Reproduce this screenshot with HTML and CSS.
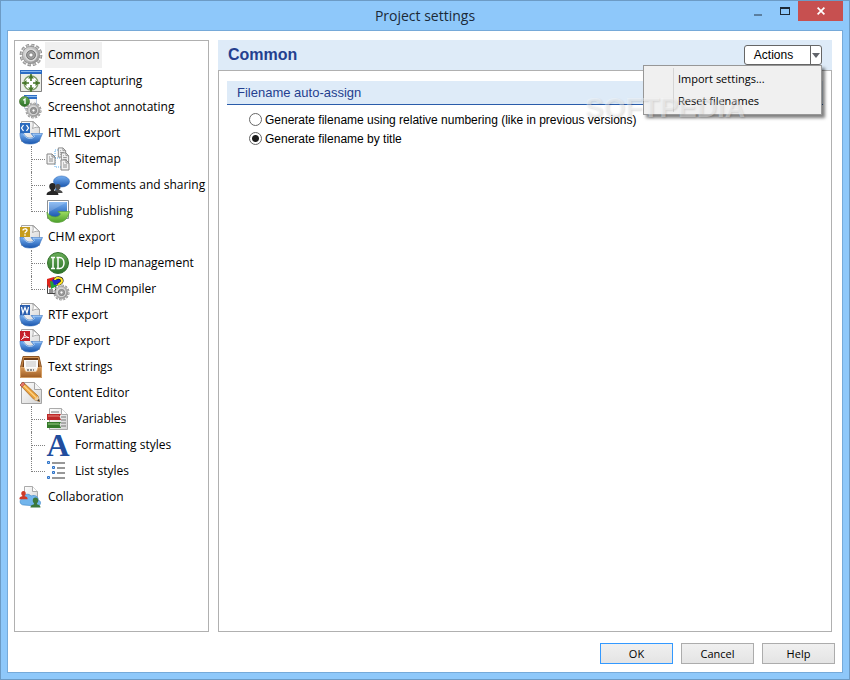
FILE: index.html
```html
<!DOCTYPE html>
<html lang="en">

<head>
    <meta charset="UTF-8">
    <meta name="viewport" content="width=device-width, initial-scale=1.0">
    <title>Project settings</title>
    <link rel="stylesheet" href="styles.css">
</head>

<body>
    <!-- Shared icon parts -->
    <svg class="defs" width="0" height="0" aria-hidden="true">
        <defs>
            <linearGradient id="metal" x1="0" y1="0" x2="1" y2="1">
                <stop offset="0" stop-color="#e2e2e2" />
                <stop offset="0.5" stop-color="#b8b8b8" />
                <stop offset="1" stop-color="#8b8b8b" />
            </linearGradient>
            <linearGradient id="blue" x1="0" y1="0" x2="0" y2="1">
                <stop offset="0" stop-color="#78b1f2" />
                <stop offset="1" stop-color="#1b57ae" />
            </linearGradient>
            <linearGradient id="green" x1="0" y1="0" x2="0" y2="1">
                <stop offset="0" stop-color="#69ad58" />
                <stop offset="1" stop-color="#2b7128" />
            </linearGradient>
            <linearGradient id="lime" x1="0" y1="0" x2="0" y2="1">
                <stop offset="0" stop-color="#9ddd61" />
                <stop offset="1" stop-color="#4da02c" />
            </linearGradient>
            <linearGradient id="paper" x1="0" y1="0" x2="1" y2="1">
                <stop offset="0" stop-color="#ffffff" />
                <stop offset="1" stop-color="#d4d4d4" />
            </linearGradient>
            <linearGradient id="wood" x1="0" y1="0" x2="0" y2="1">
                <stop offset="0" stop-color="#d79755" />
                <stop offset="1" stop-color="#9d5c24" />
            </linearGradient>
            <symbol id="gear" viewBox="0 0 24 24">
                <circle cx="12" cy="12" r="9.8" fill="none" stroke="#777" stroke-width="3" pathLength="72" stroke-dasharray="3.8 2.2" />
                <circle cx="12" cy="12" r="9.6" fill="none" stroke="#c4c4c4" stroke-width="2.2" pathLength="72" stroke-dasharray="3 3" stroke-dashoffset="-0.4" />
                <circle cx="12" cy="12" r="8.6" fill="url(#metal)" stroke="#8b8b8b" stroke-width="0.7" />
                <circle cx="12" cy="12" r="5.6" fill="none" stroke="#dcdcdc" stroke-width="1.6" />
                <circle cx="12" cy="12" r="4.4" fill="#a2a2a2" stroke="#707070" stroke-width="0.9" />
                <circle cx="12" cy="12" r="2.1" fill="#fff" stroke="#777" stroke-width="0.8" />
            </symbol>
            <symbol id="export" viewBox="0 0 24 24">
                <path d="M2.500.5h12l6 6v14h-18z" fill="url(#paper)" stroke="#a5a5a5" />
                <path d="M13.500.5c1 2 1 4 0 7 3-1.500 5-1.500 7-1z" fill="#fff" stroke="#999" stroke-width="0.8" />
                <path d="M1 12c0 8 3 11 9.500 11 6 0 10-1.500 11-6l2-4.500H12l2.500 3c-1.500 2.500-8 2.500-10-3.500z" fill="url(#blue)" stroke="#3570bd" stroke-width="0.6" />
                <path d="M4.500 13c2 5.500 9 5.500 11 2.500l-1.500-2.300h8.500" fill="none" stroke="#b4d4f8" stroke-width="0.8" />
            </symbol>
            <symbol id="sheet" viewBox="0 0 10 12">
                <path d="M1 1h5l3 3v7H1z" fill="#f2f2f2" stroke="#858585" />
                <path d="M6 1v3h3M3 4h1M3 6h4M3 8h4" fill="none" stroke="#858585" stroke-width="0.9" />
            </symbol>
            <symbol id="person" viewBox="0 0 12 12">
                <path d="M6 .5c2 0 3 1.400 3 3.200 0 1.500-.7 2.500-1.400 3.100v1c2.200.5 3.900 1.200 3.900 3.700H.5c0-2.500 1.700-3.200 3.900-3.700v-1C3.700 6.200 3 5.200 3 3.700 3 1.900 4 .5 6 .5z" />
            </symbol>
        </defs>
    </svg>

    <div class="window">
        <header class="titlebar">
            <h1 class="window-title">Project settings</h1>
            <div class="window-buttons">
                <button class="win-btn" aria-label="Minimize">
                    <svg width="10" height="12" viewBox="0 0 10 12"><path d="M1 9h8v2H1z" fill="#5b7f9f" /></svg>
                </button>
                <button class="win-btn" aria-label="Maximize">
                    <svg width="10" height="8" viewBox="0 0 10 8"><path d="M0 0h10v8H0zM1 2v5h8V2z" fill="#1d2a36" fill-rule="evenodd" /></svg>
                </button>
                <button class="win-btn close" aria-label="Close">
                    <svg width="8" height="8" viewBox="0 0 8 8"><path d="M.6.6l6.800 6.800M7.400.6L.6 7.400" stroke="#fff" stroke-width="1.700" /></svg>
                </button>
            </div>
        </header>

        <div class="client">
            <div class="content">
                <nav class="tree" aria-label="Settings sections">
                    <ul>
                        <li>
                            <a class="row selected" href="#common">
                                <svg class="icon" viewBox="0 0 24 24"><use href="#gear" width="24" height="24" /></svg>
                                <span>Common</span>
                            </a>
                        </li>
                        <li>
                            <a class="row" href="#capturing">
                                <svg class="icon" viewBox="0 0 24 24">
                                    <path d="M1.500 1.500h21v21h-21z" fill="#eceee8" stroke="#7f7f7f" />
                                    <path d="M1 1h22v4H1z" fill="#2c6cc4" />
                                    <path d="M2 2h20v1H2z" fill="#86b7ee" />
                                    <circle cx="12" cy="14" r="7" fill="#fff" stroke="#7d9c66" stroke-width="1.300" />
                                    <path d="M12 5v7M12 16v7M3 14h7M14 14h7" stroke="#47762a" stroke-width="1.600" />
                                    <path d="M12 6l-3 3.500h6zM12 22l-3-3.500h6zM4 14l3.500-3v6zM20 14l-3.500-3v6z" fill="#47762a" />
                                </svg>
                                <span>Screen capturing</span>
                            </a>
                        </li>
                        <li>
                            <a class="row" href="#annotating">
                                <svg class="icon" viewBox="0 0 24 24">
                                    <path d="M5.500.5h12v13h-12z" fill="#f7f7f7" stroke="#b9c6d8" />
                                    <path d="M5 0h13v4H5z" fill="#2f70c6" />
                                    <path d="M5 1h13v1H5z" fill="#8dbbed" />
                                    <circle cx="5.500" cy="6.500" r="5" fill="url(#green)" stroke="#38631e" stroke-width="0.6" />
                                    <path d="M4.200 5.200L6 4v5" fill="none" stroke="#fff" stroke-width="1.300" />
                                    <use href="#gear" x="6" y="7" width="17" height="17" />
                                </svg>
                                <span>Screenshot annotating</span>
                            </a>
                        </li>
                        <li>
                            <a class="row" href="#html">
                                <svg class="icon" viewBox="0 0 24 24">
                                    <use href="#export" width="24" height="24" />
                                    <path d="M1 2h10v10H1z" fill="#2b6bbe" />
                                    <path d="M4.500 4L2.500 7l2 3M7.500 4l2 3-2 3" fill="none" stroke="#fff" stroke-width="1.300" />
                                </svg>
                                <span>HTML export</span>
                            </a>
                            <ul class="branch">
                                <li>
                                    <a class="row" href="#sitemap">
                                        <svg class="icon" viewBox="0 0 24 24">
                                            <path d="M9 11V3h3M9 11v9h6M9 11h6" fill="none" stroke="#59a9e8" stroke-dasharray="1 1" />
                                            <use href="#sheet" x="0" y="6" width="10" height="12" />
                                            <use href="#sheet" x="11" y="0" width="10" height="11" />
                                            <use href="#sheet" x="14" y="5" width="10" height="11" />
                                            <use href="#sheet" x="14" y="12" width="10" height="12" />
                                        </svg>
                                        <span>Sitemap</span>
                                    </a>
                                </li>
                                <li>
                                    <a class="row" href="#comments">
                                        <svg class="icon" viewBox="0 0 24 24">
                                            <path d="M10 13l-1 5 6-3z" fill="#205eaa" />
                                            <ellipse cx="15.500" cy="8.500" rx="8" ry="5.500" fill="url(#blue)" stroke="#386fba" stroke-width="0.6" />
                                            <use href="#person" x="7" y="10" width="10" height="11" fill="#4a4a4a" />
                                            <use href="#person" x="0" y="9" width="13" height="14" fill="#272727" />
                                        </svg>
                                        <span>Comments and sharing</span>
                                    </a>
                                </li>
                                <li>
                                    <a class="row" href="#publishing">
                                        <svg class="icon" viewBox="0 0 24 24">
                                            <path d="M1.500 1.500h21v18h-21z" fill="#fff" stroke="#8d9195" />
                                            <path d="M3 3h18v15H3z" fill="url(#blue)" />
                                            <path d="M3 3h18L3 13z" fill="#fff" opacity="0.18" />
                                            <path d="M1 13c2 5 11 7 13.500 2L12 12.500h11.500L22 17c-2 4.500-6 6.500-11 6.500-7 0-10-4-10-10.500z" fill="url(#lime)" stroke="#579d3a" stroke-width="0.700" />
                                        </svg>
                                        <span>Publishing</span>
                                    </a>
                                </li>
                            </ul>
                        </li>
                        <li>
                            <a class="row" href="#chm">
                                <svg class="icon" viewBox="0 0 24 24">
                                    <use href="#export" width="24" height="24" />
                                    <path d="M1 2h10v10H1z" fill="#c69c1d" />
                                    <path d="M4 5.500C4 3.300 8 3.300 8 5.300 8 6.800 6 6.800 6 8.300M6 9.200v1.500" fill="none" stroke="#fff" stroke-width="1.400" />
                                </svg>
                                <span>CHM export</span>
                            </a>
                            <ul class="branch">
                                <li>
                                    <a class="row" href="#help-id">
                                        <svg class="icon" viewBox="0 0 24 24">
                                            <circle cx="12" cy="12" r="10.500" fill="url(#green)" stroke="#34722d" />
                                            <path d="M7 6v12M5 6.500h4M5 17.500h4M12 6.500v11M10.500 6.500h3c6 0 6 11 0 11h-3" fill="none" stroke="#fff" stroke-width="1.500" />
                                        </svg>
                                        <span>Help ID management</span>
                                    </a>
                                </li>
                                <li>
                                    <a class="row" href="#compiler">
                                        <svg class="icon" viewBox="0 0 24 24">
                                            <path d="M1.500 5.500h8v11h-8z" fill="#fff" stroke="#444" />
                                            <path d="M3 13h4M3 15h4" stroke="#222" />
                                            <path d="M1 2l7-2 3 3-2 6-6 2-2-4z" fill="#e0251b" />
                                            <path d="M4 4l5 1 2 4-6 3z" fill="#20a43a" />
                                            <path d="M6 3l6-3 4 3-3 4-5 1z" fill="#202ad0" />
                                            <path d="M9 3c0-3 7-3 7 1 0 3-4 2-4 5" fill="none" stroke="#222" stroke-width="3.200" />
                                            <path d="M9 3c0-3 7-3 7 1 0 3-4 2-4 5" fill="none" stroke="#ffe424" stroke-width="2" />
                                            <use href="#gear" x="7" y="7" width="17" height="17" />
                                        </svg>
                                        <span>CHM Compiler</span>
                                    </a>
                                </li>
                            </ul>
                        </li>
                        <li>
                            <a class="row" href="#rtf">
                                <svg class="icon" viewBox="0 0 24 24">
                                    <use href="#export" width="24" height="24" />
                                    <path d="M1 2h10v10H1z" fill="#2b5fae" />
                                    <path d="M2.500 4l1.400 6L6 4.500 8 10l1.500-6" fill="none" stroke="#fff" stroke-width="1.200" />
                                </svg>
                                <span>RTF export</span>
                            </a>
                        </li>
                        <li>
                            <a class="row" href="#pdf">
                                <svg class="icon" viewBox="0 0 24 24">
                                    <use href="#export" width="24" height="24" />
                                    <path d="M1 2h10v10H1z" fill="#c5202a" />
                                    <path d="M2.500 10.500C4.500 9 6.500 5 5.500 3.500 4.500 4 6 8 9.800 8.600 7 7.500 4 8.500 2.500 10.500z" fill="none" stroke="#fff" />
                                </svg>
                                <span>PDF export</span>
                            </a>
                        </li>
                        <li>
                            <a class="row" href="#strings">
                                <svg class="icon" viewBox="0 0 24 24">
                                    <path d="M4 1.500h16l2.500 11v10h-21v-10z" fill="url(#wood)" stroke="#8c5524" />
                                    <path d="M5 3h14l1.500 9h-17z" fill="#71401a" />
                                    <path d="M5 5h14v11H5z" fill="#fafafa" />
                                    <path d="M7 7h10M7 9h10M7 11h10" stroke="#c4c4c4" />
                                    <path d="M1.500 12.500H5l1.500 4h11l1.500-4h3.500v10h-21z" fill="url(#wood)" stroke="#e2ad72" stroke-width="0.800" />
                                    <path d="M7 13h10v3.500H7z" fill="#f4efe8" />
                                    <path d="M8 15h2M11 15h2M14 15h1" stroke="#8c8c8c" stroke-width="2" />
                                </svg>
                                <span>Text strings</span>
                            </a>
                        </li>
                        <li>
                            <a class="row" href="#editor">
                                <svg class="icon" viewBox="0 0 24 24">
                                    <path d="M2.500 1.500h13l7 7v14h-20z" fill="url(#paper)" stroke="#a4a4a4" />
                                    <path d="M15.500 1.500v7h7" fill="#f4f4f4" stroke="#a4a4a4" />
                                    <path d="M1 4l3-3 15 14 1.500 5.500-5.500-2z" fill="#eba13a" stroke="#9b6122" stroke-width="0.700" />
                                    <path d="M3 3l14 13.500" stroke="#ffd484" stroke-width="1.400" />
                                    <path d="M1 4l3-3 2 2-3 3z" fill="#e3776b" stroke="#a34f42" stroke-width="0.600" />
                                    <path d="M15 18.500l4-3.500 1.500 5.500z" fill="#edcfa2" />
                                    <path d="M18 19.500l2-1.500.5 2.500z" fill="#333" />
                                </svg>
                                <span>Content Editor</span>
                            </a>
                            <ul class="branch">
                                <li>
                                    <a class="row" href="#variables">
                                        <svg class="icon" viewBox="0 0 24 24">
                                            <path d="M3.500 1.500h12l6 6v15h-18z" fill="url(#paper)" stroke="#aaa" />
                                            <path d="M15.500 1.500v6h6" fill="#fff" stroke="#aaa" />
                                            <path d="M5 5h8M15 10h5M15 13h5M15 16h5M15 19h5" stroke="#777" />
                                            <path d="M1 7h14l-1.500 2.500L15 13H1z" fill="#bd2929" />
                                            <path d="M2 9h11" stroke="#e98c81" />
                                            <path d="M1 15h14l-1.500 2.500L15 21H1z" fill="#337a2a" />
                                            <path d="M2 17h11" stroke="#9bca86" />
                                        </svg>
                                        <span>Variables</span>
                                    </a>
                                </li>
                                <li>
                                    <a class="row" href="#formatting">
                                        <svg class="icon" viewBox="0 0 24 24">
                                            <text class="letter" x="12" y="23" text-anchor="middle" fill="#214d9e">A</text>
                                        </svg>
                                        <span>Formatting styles</span>
                                    </a>
                                </li>
                                <li>
                                    <a class="row" href="#lists">
                                        <svg class="icon" viewBox="0 0 24 24">
                                            <path d="M6 4h13M11 9h8M11 14h8M6 19h13" stroke="#777" stroke-width="1.500" />
                                            <path d="M1.500 2.500h2v2h-2zM6.500 7.500h2v2h-2zM6.500 12.500h2v2h-2zM1.500 17.500h2v2h-2z" fill="#a8cdf5" stroke="#2f72c7" />
                                        </svg>
                                        <span>List styles</span>
                                    </a>
                                </li>
                            </ul>
                        </li>
                        <li>
                            <a class="row" href="#collaboration">
                                <svg class="icon" viewBox="0 0 24 24">
                                    <path d="M5.500 1.500h8l5 5v10h-13z" fill="url(#paper)" stroke="#aaa" />
                                    <path d="M13.500 1.500v5h5" fill="#fff" stroke="#aaa" />
                                    <path d="M5 20c-5 0-5-6-1-7 0-4 6-5 8-2 5-2 8 2 7 4 4 1 3 6-1 6z" fill="#72b5ec" stroke="#458dcc" stroke-width="0.700" />
                                    <use href="#person" x="0" y="5" width="9" height="10" fill="#cf3a27" />
                                    <use href="#person" x="11" y="12" width="11" height="11" fill="#3b783c" />
                                </svg>
                                <span>Collaboration</span>
                            </a>
                        </li>
                    </ul>
                </nav>

                <main class="panel">
                    <div class="panel-header">
                        <h2 class="panel-title">Common</h2>
                        <div class="actions">
                            <button class="actions-main">Actions</button>
                            <button class="actions-arrow" aria-label="Open actions menu" aria-expanded="true">
                                <svg width="8" height="5" viewBox="0 0 8 5"><path d="M0 0h8L4 5z" fill="#62656b" /></svg>
                            </button>
                            <div class="menu" role="menu">
                                <button class="menu-item" role="menuitem">Import settings...</button>
                                <button class="menu-item" role="menuitem">Reset filenames</button>
                                <span class="watermark">SOFTPEDIA</span>
                            </div>
                        </div>
                    </div>
                    <form class="panel-body">
                        <h3 class="section-title">Filename auto-assign</h3>
                        <div class="options">
                            <label class="option"><input type="radio" name="assign"> Generate filename using relative numbering (like in previous versions)</label>
                            <label class="option"><input type="radio" name="assign" checked> Generate filename by title</label>
                        </div>
                    </form>
                </main>
            </div>

            <footer class="footer">
                <button class="btn btn-ok">OK</button>
                <button class="btn">Cancel</button>
                <button class="btn">Help</button>
            </footer>
        </div>
    </div>
</body>

</html>
```

FILE: styles.css
```css
* {
    box-sizing: border-box;
}

body {
    margin: 0;
    font-family: "Open Sans", "Noto Sans", sans-serif;
    font-size: 12px;
    color: #000;
}

h1,
h2,
h3,
ul {
    margin: 0;
    padding: 0;
    font-weight: normal;
}

ul {
    list-style: none;
}

button {
    margin: 0;
    padding: 0;
    border: none;
    background: none;
    font-family: inherit;
    color: inherit;
}

.defs {
    position: absolute;
}

.window {
    display: flex;
    flex-direction: column;
    min-height: 100vh;
    padding: 0 6px 6px;
    background-color: #8ec8fa;
    border: 1px solid #6c9bc5;
}

/* Title bar */
.titlebar {
    display: grid;
    grid-template-columns: 1fr auto 1fr;
    height: 29px;
}

.window-title {
    grid-column: 2;
    font-size: 14px;
    line-height: 29px;
    color: #1b2a38;
}

.window-buttons {
    display: flex;
    justify-content: flex-end;
    align-items: flex-start;
}

.win-btn {
    display: flex;
    align-items: center;
    justify-content: center;
    width: 27px;
    height: 20px;
}

.win-btn.close {
    width: 45px;
    background-color: #c75050;
}

/* Client area */
.client {
    flex: 1;
    display: flex;
    flex-direction: column;
    padding: 9px 6px 8px;
    background-color: #fff;
    border: 1px solid #76aad9;
}

.content {
    flex: 1;
    display: flex;
    gap: 9px;
    padding-right: 4px;
}

/* Tree */
.tree {
    flex: 0 0 195px;
    min-width: 0;
    padding: 1px 0 1px 4px;
    border: 1px solid #b0b0b0;
}

.row {
    display: flex;
    align-items: center;
    gap: 2px;
    height: 26px;
    color: #000;
    text-decoration: none;
    white-space: nowrap;
}

.row span {
    padding: 0 2px 0 3px;
    line-height: 26px;
}

.row.selected span {
    background-color: #f0f0f0;
}

.icon {
    flex: none;
    width: 24px;
    height: 24px;
    overflow: visible;
}

.letter {
    font: bold 32px "Liberation Serif", serif;
}

.branch {
    padding-left: 12px;
}

.branch li {
    display: grid;
    grid-template-columns: 15px 1fr;
}

/* dotted connector lines */
.branch li::before {
    content: "";
    height: 26px;
    border-left: 1px dotted #808080;
    background: repeating-linear-gradient(to right, #808080 0 1px, transparent 1px 2px) 0 13px / 100% 1px no-repeat;
}

.branch li:last-child::before {
    height: 14px;
}

/* Right panel */
.panel {
    flex: 1;
    display: flex;
    flex-direction: column;
    font-family: "Liberation Sans", Arial, sans-serif;
}

.panel-header {
    display: flex;
    align-items: center;
    justify-content: space-between;
    height: 30px;
    padding: 0 10px;
    background-color: #deebf8;
}

.panel-title {
    font-size: 16px;
    font-weight: bold;
    color: #243f8f;
}

.actions {
    position: relative;
    display: flex;
    width: 78px;
    height: 20px;
    background-color: #fff;
    border: 1px solid #666;
    border-radius: 3px;
}

.actions-main {
    flex: 1;
    padding-right: 8px;
    font-size: 12px;
}

.actions-arrow {
    display: flex;
    align-items: center;
    justify-content: center;
    width: 11px;
    border-left: 1px solid #666;
}

.menu {
    position: absolute;
    top: 19px;
    right: -1px;
    width: 179px;
    padding: 1px 2px 3px;
    background: linear-gradient(to right, transparent 29px, #d5d5d5 29px 30px, transparent 30px) 0 2px / 100% 44px no-repeat, #f0f0f0;
    border: 1px solid #979797;
    box-shadow: 3px 3px 3px rgba(0, 0, 0, 0.5);
}

.menu-item {
    display: block;
    width: 100%;
    height: 22px;
    padding-left: 32px;
    font-family: "Open Sans", "Noto Sans", sans-serif;
    font-size: 11px;
    text-align: left;
}

.watermark {
    position: absolute;
    top: 26px;
    right: 76px;
    font-size: 28px;
    font-weight: bold;
    line-height: 32px;
    color: rgba(255, 255, 255, 0.4);
    text-shadow: 1px 1px 2px rgba(0, 0, 0, 0.12);
    pointer-events: none;
}

.panel-body {
    flex: 1;
    padding: 10px 8px;
    border: 1px solid #b0b0b0;
}

.section-title {
    padding: 1px 10px 0;
    font-size: 13px;
    line-height: 22px;
    color: #243f8f;
    background-color: #deebf8;
    border-bottom: 1px solid #2a5caa;
}

.options {
    padding: 5px 22px;
}

.option {
    display: flex;
    align-items: center;
    gap: 3px;
    height: 19px;
    font-size: 12px;
}

.option input {
    appearance: none;
    width: 13px;
    height: 13px;
    margin: 0;
    background-color: #fff;
    border: 1px solid #666;
    border-radius: 50%;
}

.option input:checked {
    background: radial-gradient(circle, #1c1c1c 3px, #fff 4px);
}

/* Footer buttons */
.footer {
    display: flex;
    justify-content: flex-end;
    gap: 8px;
    padding: 11px 1px 0 0;
}

.btn {
    width: 73px;
    height: 21px;
    font-size: 11px;
    background: linear-gradient(#f0f0f0, #e4e4e4);
    border: 1px solid #acacac;
}

.btn-ok {
    border-color: #3399ff;
}
```
